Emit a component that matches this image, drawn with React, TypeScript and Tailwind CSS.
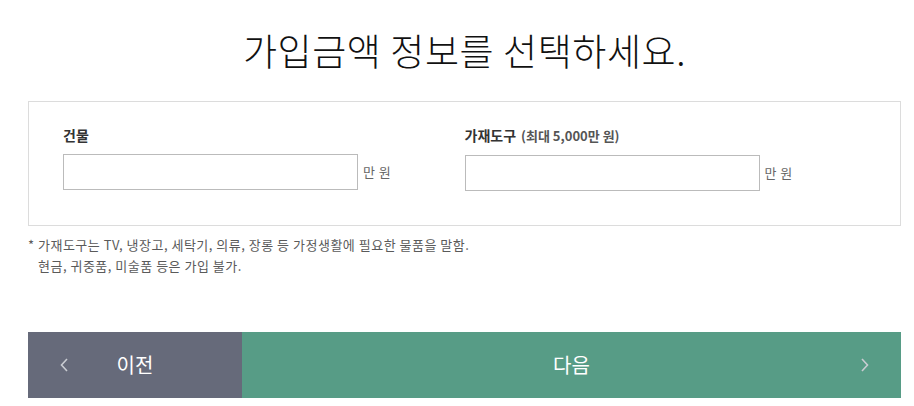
import React from "react";

const font = { fontFamily: '"Noto Sans CJK KR", "Noto Sans", sans-serif' };

function Chevron({ dir }: { dir: "left" | "right" }) {
  return (
    <svg width="8" height="14" viewBox="0 0 8 14" fill="none" stroke="#c9ccd2" strokeWidth="1.6">
      {dir === "left" ? <polyline points="7,1 1.5,7 7,13" /> : <polyline points="1,1 6.5,7 1,13" />}
    </svg>
  );
}

function Field({ label, sub }: { label: string; sub?: string }) {
  return (
    <div>
      <div className="text-[14px] font-bold text-[#333] leading-[20px]">
        {label}
        {sub && <span className="text-[13px] text-[#555] ml-[5px]">{sub}</span>}
      </div>
      <div className="flex items-center mt-[9px]">
        <input className="w-[295px] h-[36px] border border-[#bbb] bg-white outline-none px-2 text-[14px]" />
        <span className="ml-[5px] text-[13px] text-[#666] tracking-[0.5px]">만 원</span>
      </div>
    </div>
  );
}

export default function App() {
  return (
    <div className="w-[914px] h-[406px] bg-white overflow-hidden" style={font}>
      <div className="ml-[28px] w-[873px]">
        <h1 className="text-center text-[37px] leading-[40px] font-light text-[#111] pt-[30px] tracking-[0.6px]">가입금액 정보를 선택하세요.</h1>
        <div className="mt-[31px] h-[125px] border border-[#dcdcdc] px-[34px] pt-[23px] grid grid-cols-2">
          <Field label="건물" />
          <Field label="가재도구" sub="(최대 5,000만 원)" />
        </div>
        <div className="mt-[8px] text-[13px] leading-[21px] text-[#5a5a5a] tracking-[0.5px]">
          <p>* 가재도구는 TV, 냉장고, 세탁기, 의류, 장롱 등 가정생활에 필요한 물품을 말함.</p>
          <p className="pl-[10px]">현금, 귀중품, 미술품 등은 가입 불가.</p>
        </div>
        <div className="mt-[56px] flex h-[66px]">
          <button className="w-[214px] bg-[#666a7a] flex items-center text-white text-[20px]">
            <span className="ml-[32px]"><Chevron dir="left" /></span>
            <span className="flex-1 text-center pr-[40px]">이전</span>
          </button>
          <button className="flex-1 bg-[#579c86] flex items-center text-white text-[20px]">
            <span className="flex-1 text-center pl-[40px]">다음</span>
            <span className="mr-[32px]"><Chevron dir="right" /></span>
          </button>
        </div>
      </div>
    </div>
  );
}
